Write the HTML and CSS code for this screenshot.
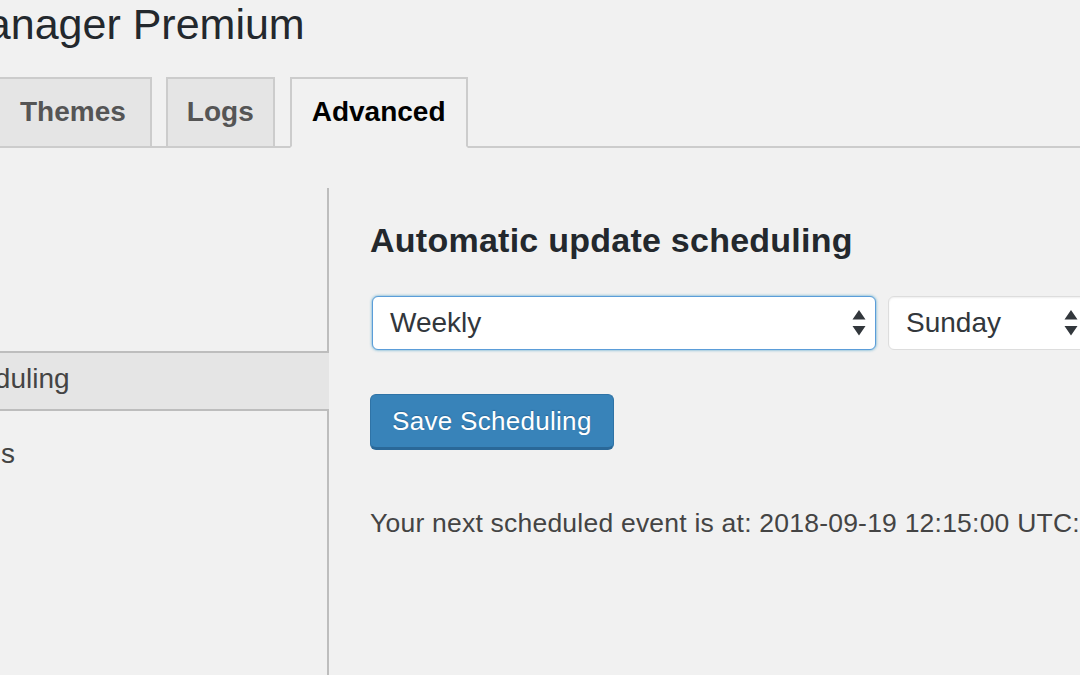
FILE: index.html
```html
<!DOCTYPE html>
<html>
<head>
<meta charset="utf-8">
<link rel="stylesheet" href="styles.css">
</head>
<body>
<div class="page">
  <h1 class="title">Manager Premium</h1>
  <nav class="tabs">
    <span class="tab first">Themes</span>
    <span class="tab">Logs</span>
    <span class="tab active">Advanced</span>
  </nav>
  <div class="main">
    <aside class="sidebar">
      <div class="side-top"></div>
      <div class="side-item current">Scheduling</div>
      <div class="side-item rest">Emails</div>
    </aside>
    <section class="content">
      <h2 class="heading">Automatic update scheduling</h2>
      <div class="selects">
        <div class="select focus"><span>Weekly</span>
          <svg class="arrows" width="14" height="27" viewBox="0 0 14 27"><path d="M7 0 L13.5 9.5 L0.5 9.5 Z M0.5 16 L13.5 16 L7 25.5 Z" fill="#32373c"/></svg>
        </div>
        <div class="select day"><span>Sunday</span>
          <svg class="arrows" width="14" height="27" viewBox="0 0 14 27"><path d="M7 0 L13.5 9.5 L0.5 9.5 Z M0.5 16 L13.5 16 L7 25.5 Z" fill="#32373c"/></svg>
        </div>
      </div>
      <button class="btn">Save Scheduling</button>
      <p class="next">Your next scheduled event is at: 2018-09-19 12:15:00 UTC:</p>
    </section>
  </div>
</div>
</body>
</html>
```
FILE: styles.css
```css
html, body {
  margin: 0;
  padding: 0;
  background: #f1f1f1;
}
body {
  width: 1080px;
  height: 675px;
  overflow: hidden;
  font-family: "Liberation Sans", Arial, sans-serif;
  color: #444;
}
.page {
  width: 1080px;
  height: 675px;
  display: flex;
  flex-direction: column;
}
.title {
  margin: -1px 0 0 -49px;
  font-size: 43px;
  line-height: 50px;
  font-weight: 400;
  color: #23282d;
  white-space: nowrap;
}
.tabs {
  display: flex;
  gap: 14px;
  margin-top: 28px;
  margin-left: 0;
  border-bottom: 2px solid #ccc;
}
.tab {
  display: block;
  border: 2px solid #ccc;
  margin-bottom: -2px;
  background: #e5e5e5;
  color: #555;
  font-size: 28px;
  font-weight: 700;
  line-height: 32px;
  padding: 17px 19px 18px 19px;
}
.tab.first {
  margin-left: -2px;
  padding-left: 20px;
  padding-right: 24px;
}
.tab.active {
  margin-left: 1px;
  padding-left: 20px;
  padding-right: 20px;
  background: #f1f1f1;
  color: #000;
  border-bottom-color: #f1f1f1;
}
.main {
  flex: 1;
  display: flex;
}
.sidebar {
  width: 398px;
  margin-left: -69px;
  margin-top: 40px;
  display: flex;
  flex-direction: column;
  flex: none;
}
.side-top {
  height: 163px;
  border-right: 2px solid #bdbdbd;
  border-bottom: 2px solid #bdbdbd;
}
.side-item {
  font-size: 28px;
  line-height: 32px;
  color: #444;
  white-space: nowrap;
}
.side-item.current {
  background: #e5e5e5;
  padding: 10px 0 14px 0;
}
.side-item.rest {
  flex: 1;
  border-top: 2px solid #bdbdbd;
  border-right: 2px solid #bdbdbd;
  padding-top: 27px;
}
.content {
  flex: 1;
  padding: 72px 0 0 41px;
  min-width: 0;
}
.heading {
  margin: 0;
  font-size: 34px;
  line-height: 40px;
  font-weight: 700;
  letter-spacing: 0.25px;
  color: #23282d;
  white-space: nowrap;
}
.selects {
  display: flex;
  gap: 12px;
  margin: 36px 0 0 2px;
}
.select {
  box-sizing: border-box;
  height: 54px;
  background: #fff;
  border: 1px solid #ddd;
  border-radius: 6px;
  box-shadow: inset 0 1px 2px rgba(0,0,0,0.07);
  display: flex;
  align-items: center;
  justify-content: space-between;
  padding: 0 9px 0 17px;
  font-size: 28px;
  line-height: 32px;
  color: #32373c;
  flex: none;
}
.select.focus {
  width: 504px;
  border-color: #5b9dd9;
  box-shadow: 0 0 3px rgba(30,140,190,0.8);
}
.select.day {
  width: 200px;
}
.arrows {
  display: block;
  flex: none;
}
.btn {
  display: block;
  margin-top: 44px;
  height: 56px;
  box-sizing: border-box;
  padding: 0 21px;
  background: #3883b9;
  border: 1px solid #2f73a6;
  border-bottom: 3px solid #2a6898;
  border-radius: 6px;
  color: #fff;
  font-family: "Liberation Sans", Arial, sans-serif;
  font-size: 26px;
  letter-spacing: 0.3px;
  line-height: 30px;
  text-shadow: 0 -1px 1px #2a6898;
}
.next {
  margin: 55px 0 0 0;
  font-size: 26.5px;
  letter-spacing: 0.22px;
  line-height: 36px;
  color: #444;
  white-space: nowrap;
}
```
